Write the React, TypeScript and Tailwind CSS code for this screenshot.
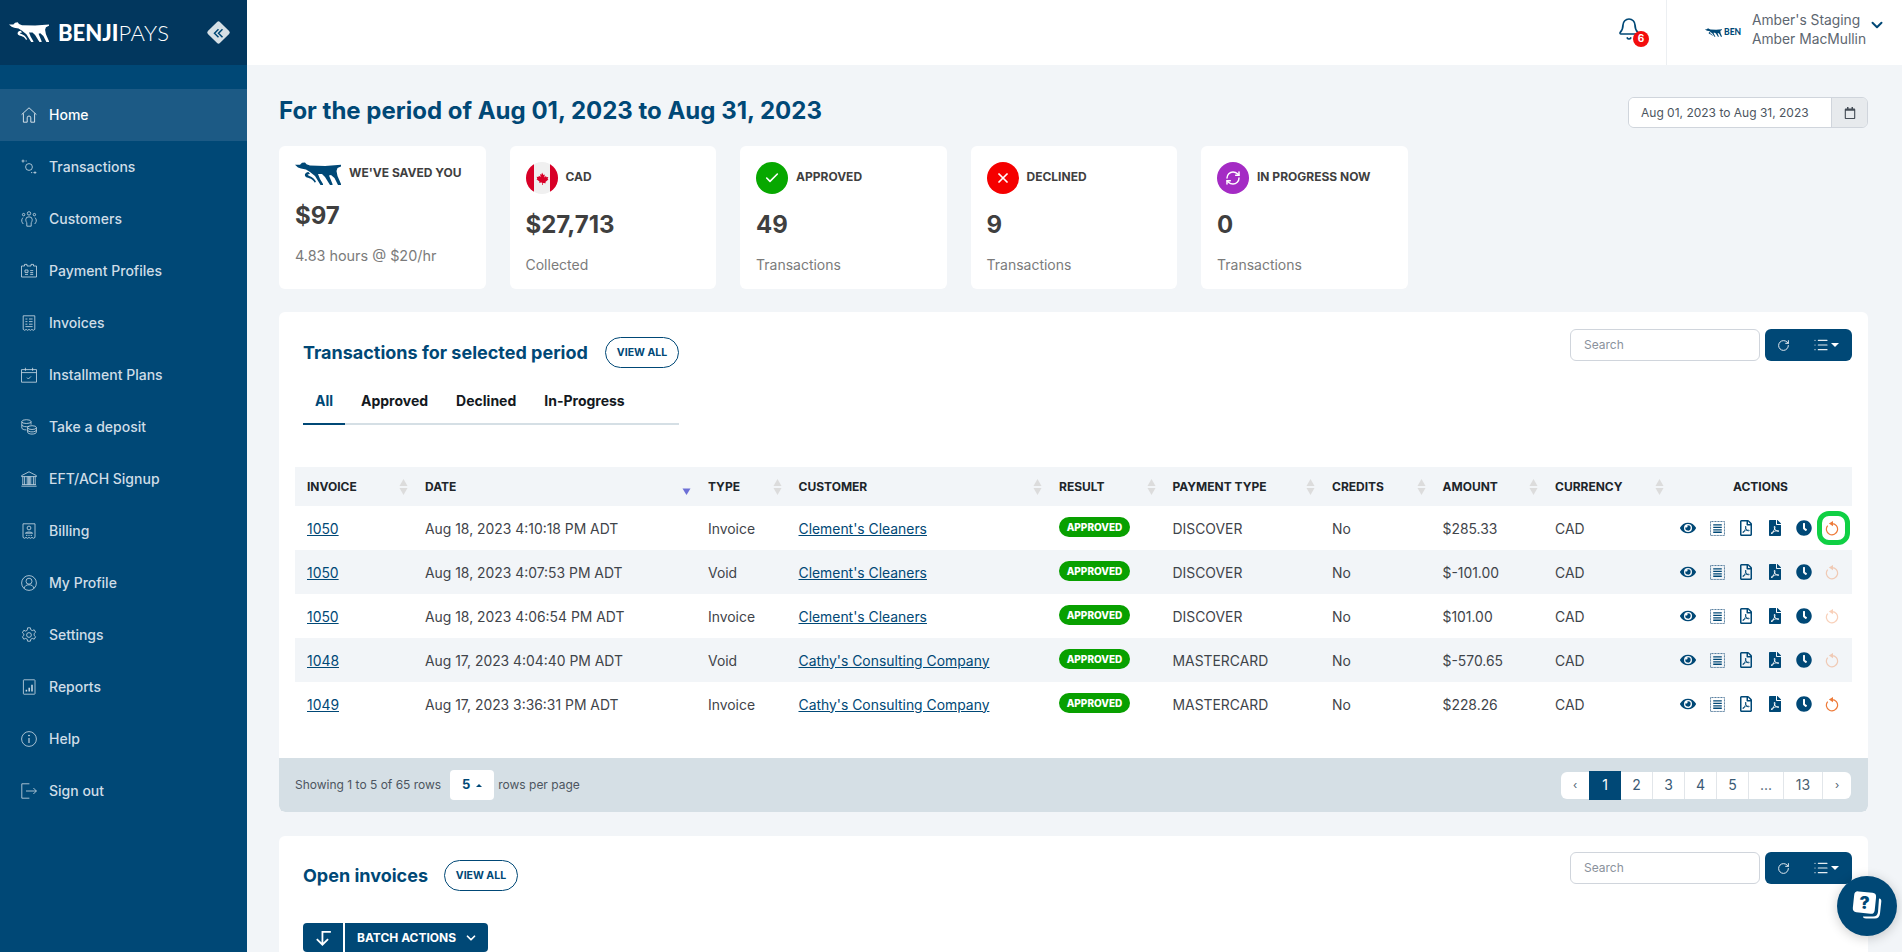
import { Bell, Check, ChevronDown, List, RefreshCw, RotateCw, X } from 'lucide-react';
import { FaClock, FaEye, FaFilePdf, FaRegCalendar, FaRegFilePdf } from 'react-icons/fa';

const DOG_BODY =
  'M0 2.8 L5 2.8 L7 .8 L10 .4 L11.5 2.2 L15 3.6 L30 4 L46 2.8 L46 4.4 L42.5 6 L41.5 9 L42.5 14 L46 22 L46 23 L43 23 L39.5 16 L36 13 L34 13.5 L37.5 22 L37.5 23 L35 23 L30 15 L27 12 L23 12 L25 17 L28 22 L28 23 L25.5 23 L20 14 L15 10 L11 7.4 L6 6.6 L3 5.6 Z M13.5 10 C9 10.5 9 14.5 12 15.5 C15 16.5 18 17 19.5 20.5 L21 20 C19.5 16 16 14.5 13.5 13.5 C12 13 12.5 12 15 12 Z';

const Dog = ({ className }: { className: string }) => (
  <svg viewBox="0 0 46 23" className={className} fill="currentColor">
    <path d={DOG_BODY} />
  </svg>
);

const Stroke = ({ children }: { children: React.ReactNode }) => (
  <svg viewBox="0 0 16 16" className="w-4 h-4 shrink-0" fill="none" stroke="currentColor" strokeWidth="0.8">
    {children}
  </svg>
);

const navItems: { label: string; icon: React.ReactNode }[] = [
  { label: 'Home', icon: <Stroke><path d="M.6 7.6 8 .8l7.4 6.8M2.4 6.4v8.8h3.8v-4.4a1.8 1.8 0 0 1 3.6 0v4.4h3.8V6.4" /></Stroke> },
  { label: 'Transactions', icon: <Stroke><circle cx="8" cy="8" r="3.4" /><path d="M.6 2h3M2 .6v3M12.4 13.6h3M14 12.4v2.4M4.6 2h1.2M10 13.6h1.2" /></Stroke> },
  { label: 'Customers', icon: <Stroke><circle cx="8" cy="2.4" r="1.7" /><circle cx="2.6" cy="3.6" r="1.2" /><circle cx="13.4" cy="3.6" r="1.2" /><path d="M4.8 8.4a3.2 2.6 0 0 1 6.4 0c0 2-.8 3-1 3.4v3.4H5.8v-3.4c-.2-.4-1-1.4-1-3.4zM2.2 6.6c-1.6.8-2 3.6-.8 5.2l.9 1.2M13.8 6.6c1.6.8 2 3.6.8 5.2l-.9 1.2" /></Stroke> },
  { label: 'Payment Profiles', icon: <Stroke><path d="M.5 3h3V1.4h2.5V3h4V1.4h2.5V3h3v11H.5z" /><path d="M4 7h3v2.4H4zM4 11.4h3M9.2 7.6h3M9.2 9.6h3M9.2 11.4h3" /></Stroke> },
  { label: 'Invoices', icon: <Stroke><path d="M2.2.8h11.6v13.6l-1.5.9-1.4-.9-1.5.9L8 14.4l-1.4.9-1.5-.9-1.4.9-1.5-.9z" /><path d="M4.4 4h2M8 4h3.6M4.4 6.6h2M8 6.6h3.6M4.4 9.2h2M8 9.2h3.6M4.4 11.6h7.2" /></Stroke> },
  { label: 'Installment Plans', icon: <Stroke><path d="M.5 2.6h15v12.6H.5zM.5 5.6h15M4.4.8v3M11.6.8v3M6 10.6l1.4 1.4L10 9.4" /></Stroke> },
  { label: 'Take a deposit', icon: <Stroke><ellipse cx="5.4" cy="2.6" rx="4.6" ry="1.9" /><path d="M.8 2.6v6.4c0 1 2 1.9 4.6 1.9M.8 5.8c0 1 2 1.9 4.6 1.9 1 0 2-.1 2.8-.4M10 2.6v3" /><ellipse cx="11" cy="8.6" rx="4.4" ry="1.9" /><path d="M6.6 8.6v4.6c0 1 2 1.9 4.4 1.9s4.4-.9 4.4-1.9V8.6M6.6 11c0 1 2 1.9 4.4 1.9s4.4-.9 4.4-1.9" /></Stroke> },
  { label: 'EFT/ACH Signup', icon: <Stroke><path d="M.6 4.6 8 .8l7.4 3.8v1H.6zM1.8 5.6v8M3.6 5.6v8M6.2 5.6v8M7.4 5.6v8M8.6 5.6v8M9.8 5.6v8M12.4 5.6v8M14.2 5.6v8M1 13.6h14M.4 15.2h15.2" /></Stroke> },
  { label: 'Billing', icon: <Stroke><path d="M2 .8h12v13.6l-1.5.9-1.5-.9-1.5.9L8 14.4l-1.5.9-1.5-.9-1.5.9-1.5-.9z" /><circle cx="8" cy="5" r="1.9" /><path d="M4.4 10.2c.6-1.6 6.6-1.6 7.2 0zM5 12.4h1.4M7.4 12.4h1.2M9.6 12.4H11" /></Stroke> },
  { label: 'My Profile', icon: <Stroke><circle cx="8" cy="8" r="7.4" /><circle cx="8" cy="6.2" r="3" /><path d="M3 13.4c.8-2.6 2.4-3.6 5-3.6s4.2 1 5 3.6" /></Stroke> },
  { label: 'Settings', icon: <Stroke><circle cx="8" cy="8" r="2.4" /><path d="M6.6.8h2.8l.4 2 1.5.8 1.9-.8 1.4 2.4-1.5 1.4v1.8l1.5 1.4-1.4 2.4-1.9-.8-1.5.8-.4 2H6.6l-.4-2-1.5-.8-1.9.8-1.4-2.4 1.5-1.4V7.1L1.4 5.7l1.4-2.4 1.9.8 1.5-.8z" /></Stroke> },
  { label: 'Reports', icon: <Stroke><path d="M3 .8h10.4c.4 0 .6.2.6.6v13.2c0 .4-.2.6-.6.6H3c-.4 0-.6-.2-.6-.6V1.4c0-.4.2-.6.6-.6z" /><path d="M5.4 12.4v-1.6M8.2 12.4V8.8M11 12.4V5.8" strokeWidth="1.5" /></Stroke> },
  { label: 'Help', icon: <Stroke><circle cx="8" cy="8" r="7.4" /><path d="M8 7v5" strokeWidth="1.1" /><circle cx="8" cy="4.6" r=".5" fill="currentColor" /></Stroke> },
  { label: 'Sign out', icon: <Stroke><path d="M8.4.8H.8v14.4h7.6M5 8h10.4M12.4 5l3 3-3 3" /></Stroke> },
];

const rows = [
  { invoice: '1050', date: 'Aug 18, 2023 4:10:18 PM ADT', type: 'Invoice', customer: "Clement's Cleaners", payment: 'DISCOVER', amount: '$285.33', retry: 'full', ring: true },
  { invoice: '1050', date: 'Aug 18, 2023 4:07:53 PM ADT', type: 'Void', customer: "Clement's Cleaners", payment: 'DISCOVER', amount: '$-101.00', retry: 'faint', ring: false },
  { invoice: '1050', date: 'Aug 18, 2023 4:06:54 PM ADT', type: 'Invoice', customer: "Clement's Cleaners", payment: 'DISCOVER', amount: '$101.00', retry: 'faint', ring: false },
  { invoice: '1048', date: 'Aug 17, 2023 4:04:40 PM ADT', type: 'Void', customer: "Cathy's Consulting Company", payment: 'MASTERCARD', amount: '$-570.65', retry: 'faint', ring: false },
  { invoice: '1049', date: 'Aug 17, 2023 3:36:31 PM ADT', type: 'Invoice', customer: "Cathy's Consulting Company", payment: 'MASTERCARD', amount: '$228.26', retry: 'full', ring: false },
];

const columns = [
  { label: 'INVOICE', width: 'w-[118px]' },
  { label: 'DATE', width: 'w-[283px]', sorted: true },
  { label: 'TYPE', width: 'w-[90.5px]' },
  { label: 'CUSTOMER', width: 'w-[260.5px]' },
  { label: 'RESULT', width: 'w-[113.5px]' },
  { label: 'PAYMENT TYPE', width: 'w-[159.5px]' },
  { label: 'CREDITS', width: 'w-[110.5px]' },
  { label: 'AMOUNT', width: 'w-[112.5px]' },
  { label: 'CURRENCY', width: 'w-[126px]' },
];

const SortIcon = ({ sorted }: { sorted?: boolean }) => (
  <svg viewBox="0 0 8 16" className="w-[9px] h-4 shrink-0">
    {sorted ? (
      <path d="M0 9.5h8L4 16z" fill="#6d70d6" />
    ) : (
      <>
        <path d="M4 0 8 7H0z" fill="#dcdcdc" />
        <path d="M0 9h8l-4 7z" fill="#dcdcdc" />
      </>
    )}
  </svg>
);

// arc runs clockwise from the top, the gap sits at about 11 o'clock
const RetryIcon = ({ faint }: { faint: boolean }) => (
  <svg viewBox="0 0 14 16" className={faint ? 'w-[14px] h-4 -ml-[2px] opacity-35' : 'w-[14px] h-4 -ml-[2px]'} fill="none">
    <path d="M7 3.6A5.6 5.6 0 1 1 2.7 5.6" stroke="#ee7b3a" strokeWidth="1.2" />
    <path d="M8 .9v5.4L3.9 3.6z" fill="#ee7b3a" />
  </svg>
);

const TableIcon = () => (
  <svg viewBox="0 0 14 14" className="w-[15px] h-[15px]">
    <rect x=".5" y=".5" width="13" height="13" fill="none" stroke="#4a7496" strokeWidth=".9" strokeDasharray="1 .4" />
    <path d="M3 3h8v1.2H3zM3 5.3h8v1.2H3zM3 7.6h8v1.2H3zM3 9.9h8v1.2H3z" fill="#004876" />
  </svg>
);

const ActionCell = ({ children }: { children: React.ReactNode }) => (
  <span className="w-[29px] flex justify-center items-center relative">{children}</span>
);

const SearchTools = ({ top }: { top: string }) => (
  <div className={`flex gap-[5px] ${top}`}>
    <div className="w-[190px] h-8 border border-[#d0d5dc] rounded-md bg-white flex items-center pl-[13px] text-xs text-[#8a929c]">
      Search
    </div>
    <div className="w-[87px] h-8 bg-[#004876] rounded-md flex items-center text-[#e6edf2]">
      <RotateCw className="w-[13px] h-[13px] ml-3" strokeWidth={1.8} />
      <List className="w-4 h-4 ml-[23px]" strokeWidth={1.8} />
      <span className="ml-[2px] border-x-[4px] border-x-transparent border-t-[4px] border-t-white" />
    </div>
  </div>
);

const ViewAll = () => (
  <button className="h-[31px] w-[74px] rounded-full border border-[#004876] text-[#004876] text-[10.5px] font-bold bg-white">
    VIEW ALL
  </button>
);

const cardClass = 'w-[206.5px] h-[143px] bg-white rounded-md pl-4 pt-4 shrink-0';

const StatCard = ({ icon, label, value, sub }: { icon: React.ReactNode; label: string; value: string; sub: string }) => (
  <div className={cardClass}>
    <div className="flex items-center h-8">
      {icon}
      <span className="ml-2 text-xs font-bold text-[#3f3f3f] -mt-[3px]">{label}</span>
    </div>
    <div className="mt-[15px] text-2xl leading-8 font-bold text-[#3f3f3f]">{value}</div>
    <div className="mt-[14px] text-[14px] leading-5 text-[#7b7b7b]">{sub}</div>
  </div>
);

export default function App() {
  return (
    <div className="flex w-full h-[952px] overflow-hidden bg-[#f2f5f8] [font-family:Inter,sans-serif] relative">
      <aside className="w-[247px] h-full shrink-0 bg-[#004876]">
        <div className="h-[65px] bg-[#02375e] flex items-center pl-[9px] relative">
          <Dog className="w-10 h-5 text-white -mt-[1px]" />
          <span className="ml-[9px] text-[22px] leading-6 font-black text-white [font-family:Lato,sans-serif]">
            BENJI<span className="font-light tracking-[0.5px]">PAYS</span>
          </span>
          <div className="ml-auto mr-[20px] w-[17px] h-[17px] rotate-45 rounded-[2px] bg-[#d5dfe5] flex items-center justify-center">
            <svg viewBox="0 0 12 12" className="w-3 h-3 -rotate-45" fill="none" stroke="#004876" strokeWidth="1.5">
              <path d="M6 2 2 6l4 4M10 2 6 6l4 4" />
            </svg>
          </div>
        </div>
        <nav className="pt-6">
          {navItems.map((item, i) => (
            <div
              key={item.label}
              className={
                i === 0
                  ? 'h-[52px] flex items-center pl-[21px] gap-3 bg-[#1c5a85] text-white text-[14px] font-medium'
                  : 'h-[52px] flex items-center pl-[21px] gap-3 text-[#cfdde7] text-[14px] font-medium'
              }
            >
              {item.icon}
              <span className="mb-[2px]">{item.label}</span>
            </div>
          ))}
        </nav>
      </aside>

      <main className="flex-1 min-w-0 h-full overflow-hidden">
        <header className="h-[65px] bg-white flex items-center justify-end">
          <div className="relative mr-[25px] -mt-[8px] text-[#004876]">
            <Bell className="w-6 h-6" strokeWidth={1.7} />
            <span className="absolute left-4 top-[14px] w-4 h-4 rounded-full bg-[#f30d0d] text-white text-[10px] font-bold flex items-center justify-center">
              6
            </span>
          </div>
          <div className="w-[236px] h-full border-l border-[#eceff2] flex items-center relative">
            <div className="ml-[38px] w-[34px] h-[12px] flex items-center text-[#004876]">
              <Dog className="w-[17px] h-[9px] shrink-0" />
              <span className="ml-[2px] text-[8.5px] font-black [font-family:Lato,sans-serif]">BEN</span>
            </div>
            <div className="ml-[13px] -mt-[5px] text-[13.8px] leading-[19.5px] text-[#5d6670] whitespace-nowrap">
              <div>Amber's Staging</div>
              <div>Amber MacMullin</div>
            </div>
            <ChevronDown className="absolute left-[201px] top-[16px] w-[18px] h-[18px] text-[#004876]" strokeWidth={2.6} />
          </div>
        </header>

        <div className="pl-8 pr-[34px] pt-8">
          <div className="flex items-center justify-between h-[31px]">
            <h1 className="text-[24px] font-bold mb-[3px] text-[#004876]">For the period of Aug 01, 2023 to Aug 31, 2023</h1>
            <div className="flex h-[31px] w-[240px] border border-[#d0d5dc] rounded-md overflow-hidden">
              <div className="flex-1 bg-white flex items-center pl-3 text-xs text-[#4c5560]">
                Aug 01, 2023 to Aug 31, 2023
              </div>
              <div className="w-9 bg-[#e7eaed] border-l border-[#d0d5dc] flex items-center justify-center text-[#444c56]">
                <FaRegCalendar className="w-3 h-3" />
              </div>
            </div>
          </div>

          <div className="flex gap-6 mt-[18px]">
            <div className={cardClass}>
              <div className="flex items-center h-[23px]">
                <Dog className="w-[46px] h-[23px] text-[#004876]" />
                <span className="ml-2 text-xs font-bold text-[#3f3f3f] -mt-[1px]">WE'VE SAVED YOU</span>
              </div>
              <div className="mt-[15px] text-2xl leading-8 font-bold text-[#3f3f3f]">$97</div>
              <div className="mt-[14px] text-[14.4px] leading-5 text-[#7b7b7b]">4.83 hours @ $20/hr</div>
            </div>
            <StatCard
              icon={
                <svg viewBox="0 0 32 32" className="w-8 h-8 shrink-0">
                  <clipPath id="flag-clip"><circle cx="16" cy="16" r="16" /></clipPath>
                  <g clipPath="url(#flag-clip)">
                    <rect width="32" height="32" fill="#f0f0f0" />
                    <rect width="8" height="32" fill="#d80027" />
                    <rect x="24" width="8" height="32" fill="#d80027" />
                    <path d="M16 10.5l1.4 2.6 1.4-.7-.5 3 1.7-1.3.5 1.2 1.8-.2-.7 2 .8.5-3 2.4.4 1.2-3-.3V23h-.7v-2.500l-3 .3.4-1.200-3-2.400.8-.5-.7-2 1.800.2.5-1.200 1.700 1.300-.5-3 1.400.7z" fill="#d80027" />
                  </g>
                </svg>
              }
              label="CAD"
              value="$27,713"
              sub="Collected"
            />
            <StatCard
              icon={
                <span className="w-8 h-8 rounded-full bg-[#07a800] flex items-center justify-center shrink-0 text-white">
                  <Check className="w-4 h-4" strokeWidth={2.4} />
                </span>
              }
              label="APPROVED"
              value="49"
              sub="Transactions"
            />
            <StatCard
              icon={
                <span className="w-8 h-8 rounded-full bg-[#f50000] flex items-center justify-center shrink-0 text-white">
                  <X className="w-4 h-4" strokeWidth={2.6} />
                </span>
              }
              label="DECLINED"
              value="9"
              sub="Transactions"
            />
            <StatCard
              icon={
                <span className="w-8 h-8 rounded-full bg-[#a42bc4] flex items-center justify-center shrink-0 text-white">
                  <RefreshCw className="w-4 h-4" strokeWidth={2.2} />
                </span>
              }
              label="IN PROGRESS NOW"
              value="0"
              sub="Transactions"
            />
          </div>

          <section className="mt-[23px] bg-white rounded-md overflow-hidden">
            <div className="flex justify-between items-start pl-6 pr-4">
              <div className="w-[376px] pt-[25px]">
                <div className="flex items-center justify-between h-[31px]">
                  <h2 className="text-[18px] font-bold text-[#004876]">Transactions for selected period</h2>
                  <ViewAll />
                </div>
                <div className="mt-[10px] h-[47px] border-b-2 border-[#d5dfe5] flex text-[14px] font-bold text-[#14191e]">
                  <span className="w-[42px] h-[47px] border-b-2 border-[#004876] flex items-center justify-center text-[#004876]">All</span>
                  <span className="ml-4 flex items-center">Approved</span>
                  <span className="ml-7 flex items-center">Declined</span>
                  <span className="ml-7 flex items-center">In-Progress</span>
                </div>
              </div>
              <SearchTools top="mt-[17px]" />
            </div>

            <div className="px-4 mt-[42px]">
              <table className="w-[1557px] table-fixed border-collapse text-[13.9px] text-[#3f444a]">
                <thead>
                  <tr className="h-[39px] bg-[#f2f5f8] text-xs font-bold text-[#20252a]">
                    {columns.map((c) => (
                      <th key={c.label} className={`${c.width} pl-3 pr-[5px] font-bold text-left`}>
                        <div className="flex items-center justify-between">
                          <span>{c.label}</span>
                          <SortIcon sorted={c.sorted} />
                        </div>
                      </th>
                    ))}
                    <th className="font-bold text-center">ACTIONS</th>
                  </tr>
                </thead>
                <tbody>
                  {rows.map((r, i) => (
                    <tr key={r.date} className={i % 2 === 1 ? 'h-11 bg-[#f2f5f8]' : 'h-11'}>
                      <td className="pl-3 pt-[2px]"><a className="underline text-[#004876]">{r.invoice}</a></td>
                      <td className="pl-3 pt-[2px]">{r.date}</td>
                      <td className="pl-3 pt-[2px]">{r.type}</td>
                      <td className="pl-3 pt-[2px]"><a className="underline text-[#004876]">{r.customer}</a></td>
                      <td className="pl-3">
                        <span className="w-[71px] h-5 -mt-[2px] rounded-full bg-[#08a000] text-white text-[10px] font-extrabold flex items-center justify-center">
                          APPROVED
                        </span>
                      </td>
                      <td className="pl-3 pt-[2px]">{r.payment}</td>
                      <td className="pl-3 pt-[2px]">No</td>
                      <td className="pl-3 pt-[2px]">{r.amount}</td>
                      <td className="pl-3 pt-[2px]">CAD</td>
                      <td>
                        <div className="flex justify-center items-center text-[#004876]">
                          <ActionCell><FaEye className="w-4 h-4" /></ActionCell>
                          <ActionCell><TableIcon /></ActionCell>
                          <ActionCell><FaRegFilePdf className="w-4 h-4" /></ActionCell>
                          <ActionCell><FaFilePdf className="w-4 h-4" /></ActionCell>
                          <ActionCell><FaClock className="w-4 h-4" /></ActionCell>
                          <ActionCell>
                            <RetryIcon faint={r.retry === 'faint'} />
                            {r.ring && (
                              <span className="absolute left-[-2px] top-[-9px] w-[33px] h-[34px] rounded-xl border-[5px] border-[#10d044]" />
                            )}
                          </ActionCell>
                        </div>
                      </td>
                    </tr>
                  ))}
                </tbody>
              </table>
            </div>

            <div className="mt-8 h-[54px] bg-[#d5dfe5] rounded-b-md flex items-center justify-between pl-4 pr-[17px] text-xs text-[#4c5560]">
              <div className="flex items-center">
                <span>Showing 1 to 5 of 65 rows</span>
                <span className="ml-[9px] w-11 h-[30px] bg-white rounded flex items-center justify-center gap-[6px] text-[#004876] text-[13px] font-bold">
                  5
                  <span className="border-x-[3px] border-x-transparent border-b-[3px] border-b-[#004876]" />
                </span>
                <span className="ml-1">rows per page</span>
              </div>
              <div className="flex h-[27px] bg-white rounded-md text-[14px] text-[#4c5f70]">
                <span className="w-7 flex items-center justify-center text-[11px]">‹</span>
                <span className="w-8 h-[29px] -mt-px bg-[#004876] text-white flex items-center justify-center">1</span>
                {['2', '3', '4', '5'].map((p) => (
                  <span key={p} className="w-8 flex items-center justify-center border-r border-[#e2e6ea] text-[#3a5a75]">{p}</span>
                ))}
                <span className="w-[35px] flex items-center justify-center border-r border-[#e2e6ea]">...</span>
                <span className="w-[39px] flex items-center justify-center border-r border-[#e2e6ea]">13</span>
                <span className="w-7 flex items-center justify-center text-[11px]">›</span>
              </div>
            </div>
          </section>

          <section className="mt-6 bg-white rounded-md pb-8">
            <div className="flex justify-between items-start pl-6 pr-4">
              <div className="pt-6">
                <div className="flex items-center gap-4 h-[31px]">
                  <h2 className="text-[18px] font-bold text-[#004876]">Open invoices</h2>
                  <ViewAll />
                </div>
                <div className="flex gap-[2px] mt-8 h-[29px] text-white">
                  <span className="w-10 bg-[#004876] rounded-l flex items-center justify-center">
                    <svg viewBox="0 0 16 16" className="w-[18px] h-[18px]" fill="none" stroke="currentColor" strokeWidth="1.6">
                      <path d="M15 2.5H7.5v11M2.5 9l5 5 5-5" />
                    </svg>
                  </span>
                  <span className="w-[143px] bg-[#004876] rounded-r flex items-center pl-3 text-xs font-bold">
                    BATCH ACTIONS
                    <ChevronDown className="w-[14px] h-[14px] ml-2" strokeWidth={3} />
                  </span>
                </div>
              </div>
              <SearchTools top="mt-4" />
            </div>
          </section>
        </div>
      </main>

      <div className="absolute left-[1837px] top-[876px] w-[60px] h-[60px] rounded-full bg-[#004876] shadow-[0_2px_12px_rgba(0,0,0,0.2)] flex items-center justify-center">
        <svg viewBox="0 0 32 32" className="w-8 h-8">
          <path d="M28 8.5c2 0 2.5 1.5 2.3 3l-1.3 12c-.3 3-2 5-5 5H15c-2 0-3-1-3-2h10c3 0 4.5-1.5 5-4.5z" fill="#fff" />
          <rect x="2.5" y="2" width="22" height="21" rx="4" fill="#fff" transform="rotate(6 13 12)" />
          <text x="13.5" y="19" textAnchor="middle" fontSize="17" fontWeight="900" fill="#004876">?</text>
        </svg>
      </div>
    </div>
  );
}
